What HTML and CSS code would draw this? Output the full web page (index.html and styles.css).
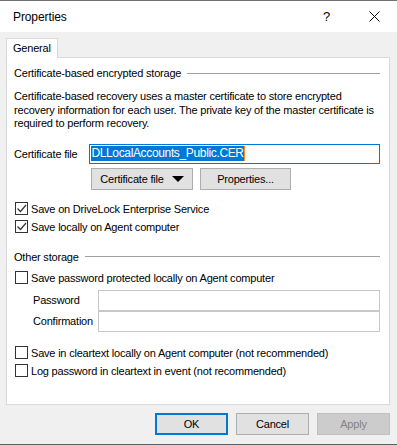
FILE: index.html
```html
<!DOCTYPE html>
<html lang="en">
<head>
  <meta charset="UTF-8">
  <meta name="viewport" content="width=device-width, initial-scale=1.0">
  <title>Properties</title>
  <link rel="stylesheet" href="styles.css">
</head>
<body>

  <div class="window">
    <!-- Title bar -->
    <div class="titlebar">
      <span class="title">Properties</span>
      <span class="help">?</span>
      <span class="close">
        <svg width="11" height="11" viewBox="0 0 11 11"><path d="M0.5 0.5 L10.5 10.5 M10.5 0.5 L0.5 10.5" stroke="#111" stroke-width="1"/></svg>
      </span>
    </div>

    <div class="client">
      <div class="tabs">
        <div class="tab">General</div>
      </div>

      <div class="panel">
        <div class="group-title">
          <span>Certificate-based encrypted storage</span>
          <span class="rule"></span>
        </div>
        <p class="note">Certificate-based recovery uses a master certificate to store encrypted recovery information for each user. The private key of the master certificate is required to perform recovery.</p>

        <div class="cert-row">
          <label class="cert-label">Certificate file</label>
          <div class="textbox focused"><span class="selected">DLLocalAccounts_Public.CER</span><span class="caret"></span></div>
        </div>
        <div class="cert-buttons">
          <button class="btn btn-cert">Certificate file <span class="arrow"></span></button>
          <button class="btn btn-props">Properties...</button>
        </div>

        <div class="check first">
          <span class="box"><svg width="11" height="11" viewBox="0 0 11 11"><path d="M1.5 5.5 L4.5 8.5 L10 2" fill="none" stroke="#333" stroke-width="1.2"/></svg></span>
          <span>Save on DriveLock Enterprise Service</span>
        </div>
        <div class="check">
          <span class="box"><svg width="11" height="11" viewBox="0 0 11 11"><path d="M1.5 5.5 L4.5 8.5 L10 2" fill="none" stroke="#333" stroke-width="1.2"/></svg></span>
          <span>Save locally on Agent computer</span>
        </div>

        <div class="group-title other">
          <span>Other storage</span>
          <span class="rule"></span>
        </div>
        <div class="check tight">
          <span class="box"></span>
          <span>Save password protected locally on Agent computer</span>
        </div>

        <div class="pw-rows">
          <div class="pw-row">
            <label>Password</label>
            <div class="textbox plain"></div>
          </div>
          <div class="pw-row">
            <label>Confirmation</label>
            <div class="textbox plain"></div>
          </div>
        </div>

        <div class="check lower">
          <span class="box"></span>
          <span>Save in cleartext locally on Agent computer (not recommended)</span>
        </div>
        <div class="check">
          <span class="box"></span>
          <span>Log password in cleartext in event (not recommended)</span>
        </div>
      </div>

      <!-- Dialog buttons -->
      <div class="footer">
        <button class="btn dlg default">OK</button>
        <button class="btn dlg">Cancel</button>
        <button class="btn dlg disabled">Apply</button>
      </div>
    </div>
  </div>

</body>
</html>
```

FILE: styles.css
```css
/* Basic window layout */
body {
  margin: 0;
  font-family: "Liberation Sans", Arial, sans-serif;
  font-size: 11px;
  letter-spacing: -0.2px;
  color: #000;
  background-color: #f0f0f0;
}

.window {
  width: 397px;
  height: 445px;
  box-sizing: border-box;
  border-top: 1px solid #707070;
  border-bottom: 1px solid #5f5f5f;
  display: flex;
  flex-direction: column;
}

/* Title bar */
.titlebar {
  height: 31px;
  background-color: #fff;
  display: flex;
  align-items: center;
  padding-left: 13px;
}

.title {
  flex: 1;
  font-size: 12px;
  letter-spacing: -0.1px;
}

.help {
  font-size: 13px;
  margin-right: 39px;
}

.close {
  display: flex;
  margin-right: 17px;
}

.client {
  flex: 1;
  background-color: #f0f0f0;
  padding: 6px 7px 0 6px;
}

/* Tab */
.tabs {
  display: flex;
}

.tab {
  height: 20px;
  line-height: 19px;
  padding-left: 6px;
  box-sizing: border-box;
  width: 52px;
  background-color: #fff;
  border: 1px solid #d9d9d9;
  border-bottom: none;
  margin-bottom: -1px;
  position: relative;
  z-index: 1;
}

.panel {
  height: 348px;
  box-sizing: border-box;
  background-color: #fff;
  border: 1px solid #d9d9d9;
  padding: 8px 9px 0 7px;
}

/* Group headers */
.group-title {
  display: flex;
  align-items: center;
  height: 14px;
}

.group-title .rule {
  flex: 1;
  border-top: 1px solid #a0a0a0;
  margin-left: 6px;
}

.group-title.other {
  margin-top: 14px;
}

.note {
  margin: 10px 0 0 0;
  line-height: 13.5px;
}

/* Certificate row */
.cert-row {
  display: flex;
  align-items: center;
  margin-top: 13px;
}

.cert-label {
  width: 76px;
}

.textbox {
  box-sizing: border-box;
  height: 20px;
  background-color: #fff;
  display: flex;
  align-items: center;
}

.textbox.focused {
  width: 293px;
  border: 1px solid #0078d7;
  padding-left: 1px;
  font-size: 12px;
  letter-spacing: -0.35px;
}

.selected {
  background-color: #0078d7;
  color: #fff;
  line-height: 15px;
}

.caret {
  width: 1px;
  height: 15px;
  background-color: #ff8c1a;
}

.cert-buttons {
  display: flex;
  gap: 7px;
  margin: 4px 0 0 77px;
}

.btn {
  font-family: "Liberation Sans", Arial, sans-serif;
  font-size: 11px;
  letter-spacing: -0.2px;
  height: 22px;
  padding: 0;
  background-color: #e1e1e1;
  border: 1px solid #adadad;
  color: #000;
}

.btn-cert {
  width: 102px;
  display: flex;
  align-items: center;
  justify-content: center;
}

.arrow {
  width: 0;
  height: 0;
  border-left: 6px solid transparent;
  border-right: 6px solid transparent;
  border-top: 6px solid #000;
  margin-left: 8px;
}

.btn-props {
  width: 91px;
}

/* Checkboxes */
.check {
  display: flex;
  align-items: center;
  height: 18px;
  padding-left: 1px;
}

.check.first {
  margin-top: 10px;
}

.check.tight {
  margin-top: 5px;
}

.check.lower {
  margin-top: 12px;
}

.box {
  width: 13px;
  height: 13px;
  box-sizing: border-box;
  border: 1px solid #333;
  background-color: #fff;
  margin-right: 3px;
  display: flex;
  align-items: center;
  justify-content: center;
}

/* Password fields */
.pw-rows {
  margin-top: 3px;
}

.pw-row {
  display: flex;
  align-items: center;
  padding-left: 19px;
}

.pw-row label {
  width: 66px;
}

.textbox.plain {
  width: 285px;
  height: 21px;
  border: 1px solid #c8c8c8;
}

/* Dialog buttons */
.footer {
  display: flex;
  justify-content: flex-end;
  gap: 8px;
  margin-top: 8px;
}

.dlg {
  width: 73px;
}

.dlg.default {
  border: 2px solid #0078d7;
}

.dlg.disabled {
  background-color: #cccccc;
  border-color: #bfbfbf;
  color: #838383;
}
```
